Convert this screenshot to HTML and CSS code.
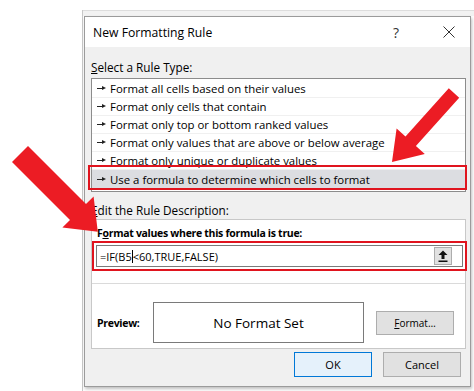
FILE: index.html
```html
<!DOCTYPE html>
<html lang="en">
  <head>
    <meta charset="UTF-8" />
    <title>New Formatting Rule</title>
    <link rel="stylesheet" href="styles.css">
  </head>
  <body>
    <div class="screen">
      <div class="sheet">
        <div class="ribbon"></div>
        <div class="dialog">
          <div class="titlebar">
            <span class="title">New Formatting Rule</span>
            <span class="help">?</span>
            <svg class="close" width="12" height="12" viewBox="0 0 12 12">
              <path d="M0.5 0.5 L11.5 11.5 M11.5 0.5 L0.5 11.5" stroke="#333" stroke-width="1" fill="none" />
            </svg>
          </div>

          <div class="body">
            <div class="label"><u>S</u>elect a Rule Type:</div>
            <ul class="rules">
              <li><span class="bullet"></span>Format all cells based on their values</li>
              <li><span class="bullet"></span>Format only cells that contain</li>
              <li><span class="bullet"></span>Format only top or bottom ranked values</li>
              <li><span class="bullet"></span>Format only values that are above or below average</li>
              <li><span class="bullet"></span>Format only unique or duplicate values</li>
              <li class="selected"><span class="bullet"></span>Use a formula to determine which cells to format<span class="mark"></span></li>
            </ul>

            <div class="label label-edit"><u>E</u>dit the Rule Description:</div>
            <div class="desc">
              <div class="desc-top">
                <div class="desc-title">F<u>o</u>rmat values where this formula is true:</div>
                <div class="formula-mark">
                  <div class="formula">
                    <span class="formula-text">=IF(B5<span class="caret"></span>&lt;60,TRUE,FALSE)</span>
                    <span class="collapse">
                      <svg width="10" height="12" viewBox="0 0 10 12">
                        <path d="M5 0.5 L9.5 5 L6.5 5 L6.5 9 L3.5 9 L3.5 5 L0.5 5 Z" fill="#111" />
                        <rect x="0.5" y="10.5" width="9" height="1.5" fill="#111" />
                      </svg>
                    </span>
                  </div>
                </div>
              </div>
              <div class="preview-row">
                <span class="preview-label">Preview:</span>
                <div class="preview">No Format Set</div>
                <span class="btn btn-format"><u>F</u>ormat…</span>
              </div>
            </div>

            <div class="actions">
              <span class="btn btn-ok">OK</span>
              <span class="btn">Cancel</span>
            </div>
          </div>
        </div>
      </div>

      <svg class="arrows" width="474" height="391" viewBox="0 0 474 391">
        <polygon points="28,146 86,204 93.6,196.4 97.8,231.8 62.4,227.6 70,220 12,162" fill="#ec1c24" />
        <polygon points="448.8,88.3 459.2,97.7 415.9,145.9 424.8,153.9 392,162 396.6,128.5 405.5,136.5" fill="#ec1c24" />
      </svg>
    </div>
  </body>
</html>
```

FILE: styles.css
```css
* {
  box-sizing: border-box;
  margin: 0;
  padding: 0;
}

body {
  font-family: "Open Sans", sans-serif;
  font-size: 11.75px;
  color: #000000;
  background-color: #ffffff;
}

.screen {
  position: relative;
  width: 474px;
  height: 391px;
  overflow: hidden;
}

/* excel window peeking out behind the dialog */
.sheet {
  margin: 10px 0 0 82px;
  height: 381px;
  border-left: 1px solid #c8c8c8;
}

.ribbon {
  height: 6px;
  background-color: #f2f2f2;
  border-top: 1px solid #dddddd;
}

.dialog {
  width: 387px;
  height: 371px;
  margin-left: 1px;
  border: 1px solid #9b9b9b;
  background-color: #f0f0f0;
  box-shadow: 1px 2px 3px rgba(0, 0, 0, 0.25);
  display: flex;
  flex-direction: column;
}

.titlebar {
  height: 30px;
  flex-shrink: 0;
  background-color: #ffffff;
  display: flex;
  align-items: center;
  padding-left: 8px;
}

.title {
  font-size: 12.2px;
  flex: 1;
}

.help {
  font-size: 14px;
  color: #333333;
  margin-right: 44px;
}

.close {
  margin-right: 15px;
}

.body {
  padding: 12px 4px 0 6px;
}

.label {
  line-height: 16px;
  margin-bottom: 3px;
}

.label-edit {
  margin: 10px 0 1px 0;
}

.rules {
  list-style: none;
  background-color: #ffffff;
  border: 1px solid #8c8c8c;
  padding: 1px 0 3px 0;
  font-size: 11.4px;
}

.rules li {
  position: relative;
  height: 18px;
  display: flex;
  align-items: center;
  padding-left: 5px;
  border-bottom: 1px solid #f0f0f0;
}

.rules li.selected {
  background-color: #dcdde1;
  border-bottom: none;
}

.bullet {
  width: 9px;
  height: 5px;
  margin-right: 4px;
  background: linear-gradient(#222, #222) left center / 6px 1px no-repeat;
  position: relative;
}

.bullet:after {
  content: "";
  position: absolute;
  right: 0;
  top: 0;
  border-left: 4px solid #222;
  border-top: 2.5px solid transparent;
  border-bottom: 2.5px solid transparent;
}

/* red highlight drawn over the selected row */
.mark {
  position: absolute;
  left: -4px;
  right: -2px;
  top: -5px;
  bottom: -2px;
  border: 2px solid #e0141e;
}

.desc {
  background-color: #ffffff;
  border: 1px solid #c8c8c8;
}

.desc-top {
  padding-top: 5px;
  padding-bottom: 12px;
  border-bottom: 1px solid #dadada;
}

.desc-title {
  font-size: 10.5px;
  font-weight: 700;
  letter-spacing: -0.3px;
  line-height: 16px;
  margin-left: 5px;
}

.formula-mark {
  border: 2px solid #e0141e;
  padding: 2px;
  margin-right: -2px;
}

.formula {
  height: 22px;
  border: 1px solid #7a7a7a;
  display: flex;
  align-items: center;
  padding-left: 3px;
}

.formula-text {
  flex: 1;
  font-size: 11px;
}

.caret {
  display: inline-block;
  width: 1px;
  height: 13px;
  background-color: #000000;
  vertical-align: -2px;
}

.collapse {
  width: 18px;
  height: 18px;
  margin-right: 10px;
  background-color: #e1e1e1;
  border: 1px solid #adadad;
  display: flex;
  align-items: center;
  justify-content: center;
}

.preview-row {
  display: flex;
  align-items: center;
  padding: 18px 11px 5px 5px;
}

.preview-label {
  font-size: 10.5px;
  font-weight: 700;
  letter-spacing: -0.3px;
  width: 56px;
}

.preview {
  width: 211px;
  height: 41px;
  border: 1px solid #7a7a7a;
  display: flex;
  align-items: center;
  justify-content: center;
  font-size: 13.5px;
}

.btn {
  height: 25px;
  width: 78px;
  font-size: 11px;
  background-color: #e1e1e1;
  border: 1px solid #adadad;
  display: flex;
  align-items: center;
  justify-content: center;
}

.btn-format {
  height: 24px;
  margin-left: auto;
  font-size: 10px;
}

.actions {
  display: flex;
  justify-content: flex-end;
  gap: 11px;
  margin-top: 3px;
  padding-right: 5px;
}

.btn-ok {
  background-color: #e5f1fb;
  border-color: #0078d7;
}

.arrows {
  position: absolute;
  left: 0;
  top: 0;
  pointer-events: none;
}
```
